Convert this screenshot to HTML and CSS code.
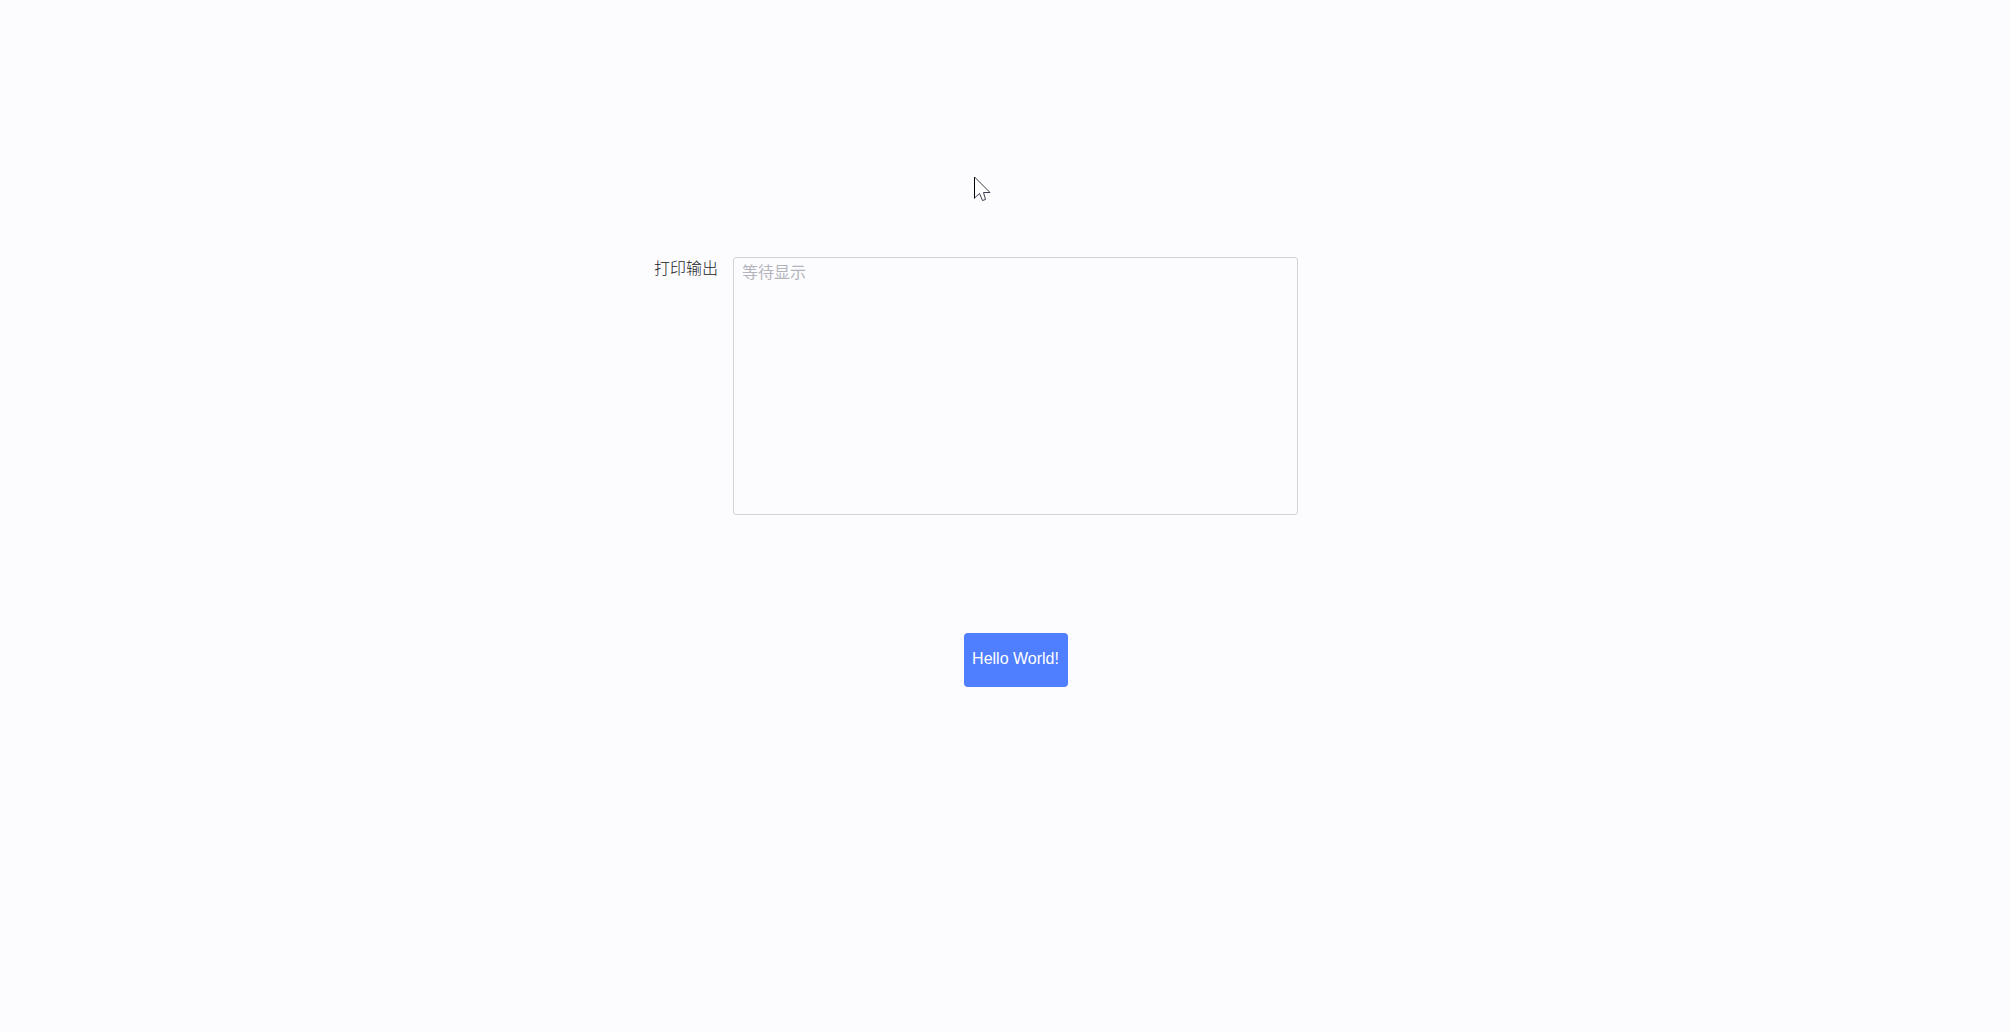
FILE: index.html
```html
<!DOCTYPE html>
<html lang="zh-CN">
<head>
<meta charset="utf-8">
<title>Hello World!</title>
<link rel="stylesheet" href="styles.css">
</head>
<body>
<main class="form">
  <label class="label" for="output">打印输出</label>
  <textarea class="output" id="output" placeholder="等待显示"></textarea>
  <button class="submit" type="button">Hello World!</button>
</main>
<svg class="cursor" width="18" height="27" viewBox="0 0 18 27" aria-hidden="true">
  <path d="M.5 1V22L5.5 17.500L8.500 24.500L11.500 23.500L9.500 16.500H16Z" fill="#fff" stroke="#3c3c50"/>
  <path d="M.5 1V22.500" stroke="#000"/>
</svg>
</body>
</html>
```
FILE: styles.css
```css
* {
  box-sizing: border-box;
}

body {
  margin: 0;
  background: #fcfcff;
  font: 16px/22px "Liberation Sans", "Noto Sans CJK SC", sans-serif;
}

.form {
  display: grid;
  grid-template-columns: 1fr minmax(0, 565px) 1fr;
  row-gap: 118px;
  padding: 257px 0 40px 21px;
}

.label {
  justify-self: end;
  padding-right: 15px;
  color: #202124;
  font-weight: 300;
  line-height: 24px;
}

.output {
  display: block;
  width: 100%;
  height: 258px;
  padding: 4px 8px;
  border: 1px solid #d2d2d8;
  border-radius: 3px;
  background: transparent;
  color: #303133;
  font: inherit;
  resize: none;
}

.output::placeholder {
  color: #b4b4bc;
}

.submit {
  grid-column: 2;
  justify-self: center;
  min-width: 104px;
  height: 54px;
  padding: 0 8px 2px;
  border: 0;
  border-radius: 4px;
  background: #4f7eff;
  color: #fff;
  font: inherit;
}

.cursor {
  position: absolute;
  top: 176px;
  left: 974px;
  fill: none;
}
```
